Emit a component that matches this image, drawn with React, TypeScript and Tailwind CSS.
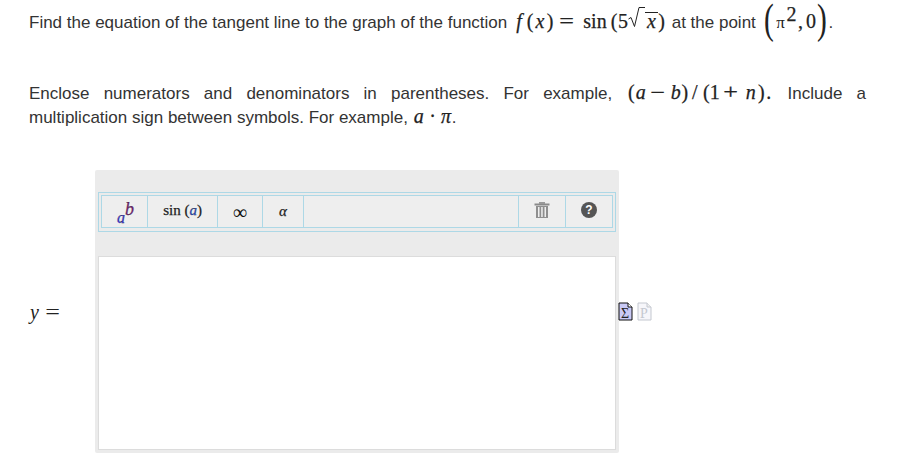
const mathFont = "font-['Liberation_Serif',serif]";
const mathInk = "text-[#222] [-webkit-text-stroke:0.25px_#222]";

const V = ({ children }: { children: string }) => <i className={mathFont}>{children}</i>;

// one math symbol in a box of fixed width, the way the math renderer spaces them
const S = ({ w, children }: { w: string; children: React.ReactNode }) => (
  <span className={`${w} inline-flex justify-center whitespace-nowrap`}>{children}</span>
);

const Wide = ({ children }: { children: string }) => <span className="inline-block scale-x-[1.3]">{children}</span>;

const ToolButton = ({ width, children, last }: { width: string; children?: React.ReactNode; last?: boolean }) => (
  <div
    className={`${width} h-full flex items-center justify-center border-[#add8e6] ${last ? "" : "border-r"} ${mathFont} text-[#111]`}
  >
    {children}
  </div>
);

const TrashIcon = () => (
  <svg width="16" height="16" viewBox="0 0 16 16" className="mb-[3px]">
    <rect x="0.5" y="1.5" width="15" height="2" fill="#8a8a8a" />
    <rect x="5" y="0" width="6" height="2" fill="#999" />
    <rect x="2" y="4" width="12" height="12" fill="#8f8f8f" />
    <rect x="4" y="5" width="1.5" height="10" fill="#efefef" />
    <rect x="7.2" y="5" width="1.5" height="10" fill="#efefef" />
    <rect x="10.5" y="5" width="1.5" height="10" fill="#efefef" />
  </svg>
);

const HelpIcon = () => (
  <div className="mb-[3px] w-[16px] h-[16px] rounded-full bg-[#555] flex items-center justify-center text-white text-[12px] font-bold font-['Liberation_Sans',sans-serif]">
    ?
  </div>
);

const DocIcon = ({ letter, active }: { letter: string; active?: boolean }) => (
  <svg width="15" height="19" viewBox="0 0 15 19">
    <path
      d="M1 1H10L14 5V18H1Z"
      fill={active ? "#c9c9f5" : "#f6f6fa"}
      stroke={active ? "#111" : "#c4c8d0"}
      strokeWidth="1"
    />
    <path d="M10 1V5H14" fill={active ? "#fff" : "#eee"} stroke={active ? "#111" : "#c4c8d0"} />
    <text
      x="7"
      y="16"
      textAnchor="middle"
      fontSize="14"
      fontFamily="Liberation Serif, serif"
      fill={active ? "#222" : "#c4c8d0"}
    >
      {letter}
    </text>
  </svg>
);

export default function App() {
  return (
    <div className="w-[920px] h-[457px] bg-white overflow-hidden font-['Liberation_Sans',sans-serif] text-[17px] text-[#333] px-[29px]">
      <div className="h-[44px] pt-[7px] flex items-baseline whitespace-pre leading-[24px]">
        <span>Find the equation of the tangent line to the graph of the function </span>
        <span className={`${mathFont} ${mathInk} text-[20px] flex items-baseline`}>
          <S w="w-[14px]"><V>f</V></S>
          <S w="w-[8px]">(</S>
          <S w="w-[12px]"><V>x</V></S>
          <S w="w-[8px]">)</S>
          <S w="w-[26px]"><Wide>=</Wide></S>
          <S w="w-[30px]">sin</S>
          <S w="w-[8px]">(</S>
          <S w="w-[10px]">5</S>
          <svg width="17" height="21" viewBox="0 0 17 21" className="-mb-[6px]">
            <path d="M0.5 12L3 10.5L6.5 19.5L11 0.5H17" fill="none" stroke="#222" strokeWidth="1" />
          </svg>
          <span className="w-[13px] inline-flex justify-center border-t border-[#222] leading-[17px]">
            <V>x</V>
          </span>
          <S w="w-[7px]">)</S>
        </span>
        <span className="ml-[2px]"> at the point </span>
        <span className={`${mathFont} text-[#222] flex items-baseline`}>
          <span className="w-[16px] inline-flex justify-center text-[42px] leading-[0] translate-y-[5px] scale-x-[0.7]">(</span>
          <S w="w-[8px]"><span className="text-[17px]">π</span></S>
          <span className={`w-[14px] inline-flex justify-center text-[20px] translate-y-[-7px] leading-none ${mathInk}`}>2</span>
          <span className={`w-[4px] inline-flex justify-center text-[20px] leading-none ${mathInk}`}>,</span>
          <span className={`w-[17px] inline-flex justify-center text-[20px] leading-none ${mathInk}`}>0</span>
          <span className="w-[14px] -ml-[5px] inline-flex justify-center text-[42px] leading-[0] translate-y-[5px] scale-x-[0.7]">)</span>
        </span>
        <span>.</span>
      </div>

      <div className="mt-[38px] w-[837px] leading-[24px]">
        <p className="text-justify">
          Enclose numerators and denominators in parentheses. For example,{" "}
          <span className={`${mathFont} ${mathInk} text-[20px] leading-none inline-flex items-baseline`}>
            <S w="w-[10px]">(</S>
            <S w="w-[9px]"><V>a</V></S>
            <S w="w-[25px]"><Wide>−</Wide></S>
            <S w="w-[11px]"><V>b</V></S>
            <S w="w-[7px]">)</S>
            <S w="w-[13px]">/</S>
            <S w="w-[10px]">(</S>
            <S w="w-[7px]">1</S>
            <S w="w-[25px]"><Wide>+</Wide></S>
            <S w="w-[15px]"><V>n</V></S>
            <S w="w-[6px]">)</S>
            <S w="w-[9px]">.</S>
          </span>{" "}
          Include a multiplication sign between symbols. For example,{" "}
          <span className={`${mathFont} ${mathInk} text-[20px] leading-none inline-flex items-baseline`}>
            <S w="w-[12px]"><V>a</V></S>
            <S w="w-[16px]">·</S>
            <S w="w-[11px]"><V>π</V></S>
          </span>
          .
        </p>
      </div>

      <div className="mt-[40px] flex items-center">
        <div className={`w-[66px] ${mathFont} text-[20px] text-[#222] flex items-baseline`}>
          <S w="w-[11px]"><V>y</V></S>
          <S w="w-[26px]"><Wide>=</Wide></S>
        </div>
        <div className="w-[524px] h-[283px] bg-[#ebebeb] rounded-[2px] px-[3px] pt-[22px] pb-[3px] flex flex-col">
          <div className="w-[518px] h-[40px] border border-[#add8e6] pt-[2px] px-[2px] pb-[3px] flex">
            <div className="flex flex-1 border border-[#add8e6] bg-[#eeeeee]">
              <ToolButton width="w-[46px]">
                <span className={`italic leading-none flex items-baseline pl-[2px] ${mathInk}`}>
                  <span className="text-[16px] text-[#3a3ae0] translate-y-[5px]">a</span>
                  <span className="text-[18px] text-[#7a1f7a] -translate-y-[3px]">b</span>
                </span>
              </ToolButton>
              <ToolButton width="w-[70px]">
                <span className={`text-[15px] mb-[2px] ${mathInk}`}>
                  sin (<span className="italic text-[#2a4fc8]">a</span>)
                </span>
              </ToolButton>
              <ToolButton width="w-[45px]">
                <span className="text-[20px]">∞</span>
              </ToolButton>
              <ToolButton width="w-[41px]">
                <span className={`text-[15px] italic ${mathInk}`}>α</span>
              </ToolButton>
              <ToolButton width="w-[215px]" />
              <ToolButton width="w-[47px]">
                <TrashIcon />
              </ToolButton>
              <ToolButton width="flex-1" last>
                <HelpIcon />
              </ToolButton>
            </div>
          </div>
          <div className="mt-[24px] w-[518px] flex-1 bg-white border border-[#dcdcdc]" />
        </div>
        <div className="ml-[-1px] flex items-center gap-[4px]">
          <DocIcon letter="Σ" active />
          <DocIcon letter="P" />
        </div>
      </div>
    </div>
  );
}
